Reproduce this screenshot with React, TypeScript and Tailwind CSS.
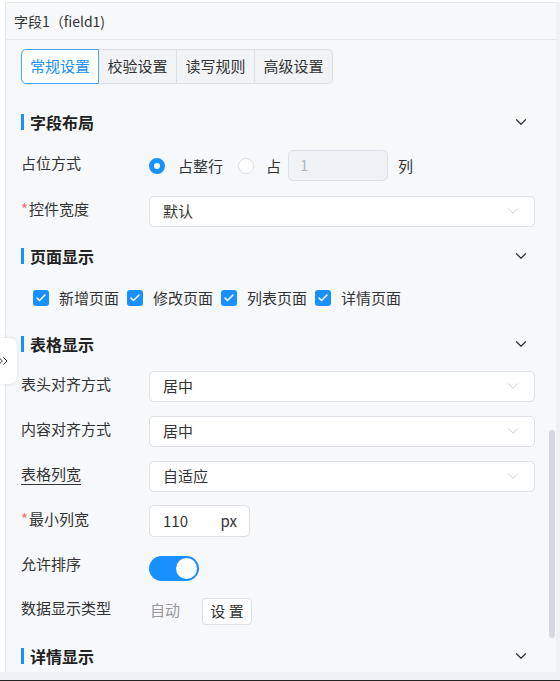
import React from 'react';
import { ChevronDown, ChevronsRight, Check } from 'lucide-react';

const font = "font-['Noto_Sans_CJK_SC','Noto_Sans',sans-serif]";

function SectionTitle({ title, className = '' }: { title: string; className?: string }) {
  return (
    <div className={`flex items-center justify-between h-6 ${className}`}>
      <div className="flex items-center">
        <span className="w-[3px] h-4 bg-[#1890ff] mr-[6px]" />
        <span className="text-[16px] leading-6 font-bold text-[#222]">{title}</span>
      </div>
      <ChevronDown className="mr-[5px] text-[#333]" size={18} strokeWidth={1.6} />
    </div>
  );
}

function FormRow({
  label,
  required,
  underline,
  className = '',
  children,
}: {
  label: string;
  required?: boolean;
  underline?: boolean;
  className?: string;
  children: React.ReactNode;
}) {
  return (
    <div className={`flex items-center h-8 ${className}`}>
      <div className="w-32 text-[15px] leading-5 text-[#333] -mt-1">
        {required && <span className="text-[#f56c6c] mr-[1px]">*</span>}
        <span className={underline ? 'underline underline-offset-4' : ''}>{label}</span>
      </div>
      <div className="flex-1 flex items-center">{children}</div>
    </div>
  );
}

function Select({ value }: { value: string }) {
  return (
    <div className="flex-1 h-[31px] bg-white border border-[#dcdfe6] rounded-[5px] flex items-center justify-between pl-[13px] pr-[12px]">
      <span className="text-[15px] text-[#333]">{value}</span>
      <ChevronDown size={18} strokeWidth={1.1} className="text-[#c0c4cc]" />
    </div>
  );
}

function CheckItem({ label }: { label: string }) {
  return (
    <div className="flex items-center">
      <span className="w-4 h-4 rounded-[3px] bg-[#1890ff] flex items-center justify-center">
        <Check size={12} strokeWidth={3} className="text-white" />
      </span>
      <span className="ml-[10px] text-[15px] text-[#333]">{label}</span>
    </div>
  );
}

export default function App() {
  const tabs = ['常规设置', '校验设置', '读写规则', '高级设置'];
  return (
    <div className={`${font} relative w-[560px] h-[681px] overflow-hidden bg-[#f0f1f4] flex flex-col`}>
      <div className="flex flex-1 min-h-0 bg-white pt-[2px] pl-[5px]">
        <div className="flex-1 flex flex-col bg-[#f7f8fa] border-l border-t border-[#e6e8eb]">
          {/* header */}
          <div className="h-[37px] flex items-center pl-2 border-b border-[#e6e8eb] text-[14px] text-[#333]">
            字段1（field1)
          </div>

          <div className="flex flex-col pl-[15px] pr-[21px]">
            {/* tabs */}
            <div className="flex mt-[9px]">
              {tabs.map((t, i) => (
                <div
                  key={t}
                  className={`h-[35px] w-[78px] flex items-center justify-center text-[15px] border ${
                    i === 0
                      ? 'bg-white border-[#49a5ff] text-[#1890ff] rounded-l-[5px]'
                      : 'bg-[#f2f3f5] border-[#dcdfe6] border-l-0 text-[#333]'
                  } ${i === tabs.length - 1 ? 'rounded-r-[5px]' : ''}`}
                >
                  {t}
                </div>
              ))}
            </div>

            <SectionTitle title="字段布局" className="mt-[26px]" />

            <FormRow label="占位方式" className="mt-[15px]">
              <span className="w-4 h-4 rounded-full border-[5px] border-[#1890ff] bg-white mt-[2px]" />
              <span className="ml-[13px] text-[15px] text-[#333] mt-[2px]">占整行</span>
              <span className="ml-[15px] w-4 h-4 rounded-full border border-[#dcdfe6] bg-white mt-[2px]" />
              <span className="ml-[12px] text-[15px] text-[#333] mt-[2px]">占</span>
              <div className="ml-[7px] w-[100px] h-[31px] rounded-[5px] border border-[#dcdfe6] bg-[#f0f2f5] flex items-center pl-[11px] text-[15px] text-[#b4b7bd]">
                1
              </div>
              <span className="ml-[10px] text-[15px] text-[#333] mt-[2px]">列</span>
            </FormRow>

            <FormRow label="控件宽度" required className="mt-[14px]">
              <Select value="默认" />
            </FormRow>

            <SectionTitle title="页面显示" className="mt-[17px]" />

            <div className="flex items-center gap-2 h-6 pl-3 mt-[18px]">
              {['新增页面', '修改页面', '列表页面', '详情页面'].map((l) => (
                <CheckItem key={l} label={l} />
              ))}
            </div>

            <SectionTitle title="表格显示" className="mt-[22px]" />

            <FormRow label="表头对齐方式" className="mt-[14px]">
              <Select value="居中" />
            </FormRow>
            <FormRow label="内容对齐方式" className="mt-[13px]">
              <Select value="居中" />
            </FormRow>
            <FormRow label="表格列宽" underline className="mt-[13px]">
              <Select value="自适应" />
            </FormRow>
            <FormRow label="最小列宽" required className="mt-[13px]">
              <div className="w-[101px] h-[32px] bg-white border border-[#dcdfe6] rounded-[5px] flex items-center justify-between pl-[13px] pr-[12px] text-[15px] text-[#333]">
                <span>110</span>
                <span>px</span>
              </div>
            </FormRow>
            <FormRow label="允许排序" className="mt-[13px]">
              <div className="w-[50px] h-[25px] rounded-full bg-[#1890ff] flex items-center justify-end pr-[2px] mt-1">
                <span className="w-[21px] h-[21px] rounded-full bg-white" />
              </div>
            </FormRow>
            <FormRow label="数据显示类型" className="mt-[12px]">
              <span className="ml-[1px] text-[15px] text-[#999]">自动</span>
              <div className="ml-[22px] w-[50px] h-[27px] bg-white border border-[#dcdfe6] rounded-[4px] flex items-center justify-center text-[15px] text-[#333] mt-[3px]">
                设 置
              </div>
            </FormRow>

            <SectionTitle title="详情显示" className="mt-[18px]" />
          </div>
        </div>
        <div className="w-1 bg-[#f0f1f4]" />
      </div>
      <div className="h-[8px] bg-[#eef0f3]" />
      <div className="h-px bg-[#222]" />

      {/* scrollbar thumb */}
      <div className="absolute left-[549px] top-[430px] w-[6px] h-[208px] rounded-full bg-[#d5d8de]" />

      {/* collapse handle */}
      <div className="absolute left-0 top-[338px] w-[17px] h-[46px] bg-white rounded-r-[8px] shadow-[0_0_4px_rgba(0,0,0,0.12)] flex items-center">
        <ChevronsRight size={16} strokeWidth={1.5} className="-ml-[5px] text-[#333]" />
      </div>
    </div>
  );
}
